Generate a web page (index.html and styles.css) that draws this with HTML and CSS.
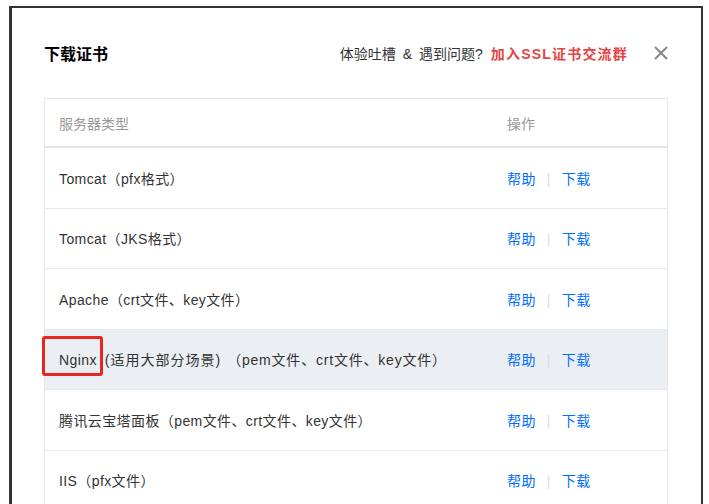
FILE: index.html
```html
<!DOCTYPE html>
<html lang="zh-CN">
<head>
    <meta charset="UTF-8">
    <meta name="viewport" content="width=device-width, initial-scale=1.0">
    <title>下载证书</title>
    <link rel="stylesheet" href="styles.css">
</head>
<body>
    <div class="dialog">
        <div class="dialog-header">
            <h2 class="dialog-title">下载证书</h2>
            <div class="header-right">
                <span class="feedback">体验吐槽 &amp; 遇到问题?</span>
                <a class="join" href="#">加入SSL证书交流群</a>
                <button class="close" aria-label="关闭">
                    <svg width="14" height="14" viewBox="0 0 14 14">
                        <path d="M1 1 L13 13 M13 1 L1 13" stroke="#888" stroke-width="2" fill="none"/>
                    </svg>
                </button>
            </div>
        </div>

        <table class="cert-table">
            <thead>
                <tr>
                    <th class="col-type">服务器类型</th>
                    <th class="col-action">操作</th>
                </tr>
            </thead>
            <tbody>
                <tr>
                    <td>Tomcat（pfx格式）</td>
                    <td class="actions"><a href="#">帮助</a><span class="sep">|</span><a href="#">下载</a></td>
                </tr>
                <tr>
                    <td>Tomcat（JKS格式）</td>
                    <td class="actions"><a href="#">帮助</a><span class="sep">|</span><a href="#">下载</a></td>
                </tr>
                <tr>
                    <td>Apache（crt文件、key文件）</td>
                    <td class="actions"><a href="#">帮助</a><span class="sep">|</span><a href="#">下载</a></td>
                </tr>
                <tr class="active">
                    <td><span class="marked">Nginx</span><span class="note">(适用大部分场景)</span><span class="files">（pem文件、crt文件、key文件）</span></td>
                    <td class="actions"><a href="#">帮助</a><span class="sep">|</span><a href="#">下载</a></td>
                </tr>
                <tr>
                    <td>腾讯云宝塔面板（pem文件、crt文件、key文件）</td>
                    <td class="actions"><a href="#">帮助</a><span class="sep">|</span><a href="#">下载</a></td>
                </tr>
                <tr>
                    <td>IIS（pfx文件）</td>
                    <td class="actions"><a href="#">帮助</a><span class="sep">|</span><a href="#">下载</a></td>
                </tr>
            </tbody>
        </table>
    </div>
</body>
</html>
```

FILE: styles.css
```css
body {
    margin: 0;
    background-color: #ffffff;
    font-family: "Liberation Sans", "Noto Sans CJK SC", sans-serif;
    font-size: 14px;
    color: #333333;
    height: 504px;
    overflow: hidden;
}

.dialog {
    margin: 6px 0 0 9px;
    width: 624px;
    height: 600px;
    padding: 25px 33px 0 32px;
    border-top: 2px solid #333333;
    border-left: 3px solid #333333;
    border-right: 2px solid #333333;
    background-color: #ffffff;
}

.dialog-header {
    display: flex;
    justify-content: space-between;
    align-items: center;
    height: 40px;
    margin-bottom: 25px;
}

.dialog-title {
    margin: 0;
    font-size: 16px;
    font-weight: bold;
    color: #000000;
}

.header-right {
    display: flex;
    align-items: center;
}

.feedback {
    color: #333333;
    word-spacing: 3px;
}

.join {
    margin-left: 8px;
    color: #e54545;
    font-weight: bold;
    letter-spacing: 1.2px;
    text-decoration: none;
}

.close {
    margin-left: 26px;
    padding: 0;
    border: none;
    background: none;
    width: 14px;
    height: 14px;
    display: flex;
}

/* Table */
.cert-table {
    width: 100%;
    border-collapse: collapse;
    border: 1px solid #e3e6eb;
}

.cert-table th {
    height: 47px;
    padding: 0 14px;
    text-align: left;
    font-weight: normal;
    color: #999999;
    border-bottom: 2px solid #e3e6eb;
}

.cert-table td {
    height: 59.5px;
    padding: 0 14px;
    border-bottom: 1px solid #e8eaef;
    letter-spacing: 0.4px;
}

.col-action {
    width: 146px;
}

.cert-table tr.active td {
    background-color: #ebeef3;
}

.actions a {
    color: #006eff;
    text-decoration: none;
}

.sep {
    color: #dddddd;
    margin: 0 11px;
}

.marked {
    position: relative;
}

.marked::after {
    content: "";
    position: absolute;
    left: -17px;
    right: -6px;
    top: -16px;
    bottom: -8px;
    border: 3px solid #e8261f;
    border-radius: 3px;
}

.note {
    margin-left: 8px;
    letter-spacing: 1px;
}

.files {
    margin-left: 6px;
    letter-spacing: 0.8px;
}
```
